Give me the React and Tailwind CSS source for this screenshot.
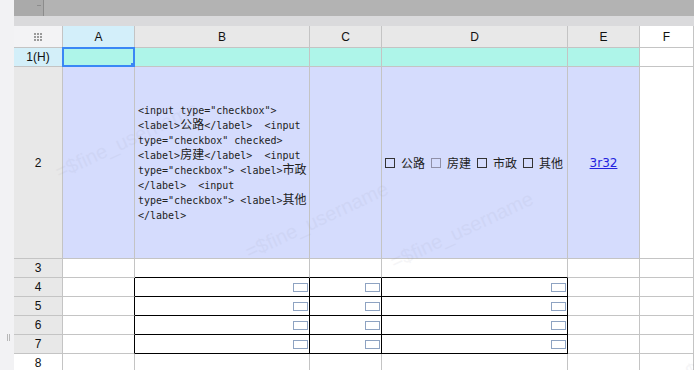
const COLS = [
  { key: 'A', w: 'w-[72px]' },
  { key: 'B', w: 'w-[175px]' },
  { key: 'C', w: 'w-[72px]' },
  { key: 'D', w: 'w-[186px]' },
  { key: 'E', w: 'w-[72px]' },
  { key: 'F', w: 'flex-1' },
]

const ROW_H = {
  1: 'h-[19px]',
  2: 'h-[192px]',
  3: 'h-[19px]',
  4: 'h-[19px]',
  5: 'h-[19px]',
  6: 'h-[19px]',
  7: 'h-[19px]',
  8: 'h-[19px]',
}

const boxed = (row, col) => row >= 4 && row <= 7 && ['B', 'C', 'D'].includes(col)

const Mini = () => (
  <div className="w-[15px] h-[9px] border border-[#8ea3c2] mr-[1px]" />
)

const Box = ({ light }) => (
  <span
    className={
      'inline-block shrink-0 w-[10px] h-[10px] border-[1.5px] ' +
      (light ? 'border-[#9090a8]' : 'border-[#333]')
    }
  />
)

const Cjk = ({ children }) => <span className="text-[12px] leading-[15px]">{children}</span>

const CodeText = () => (
  <div className="whitespace-pre font-['DejaVu_Sans_Mono','Noto_Sans_CJK_SC',monospace] text-[10px] leading-[15px] text-[#222] pl-[3px] pt-px">
    {'<input type="checkbox">\n'}
    {'<label>'}<Cjk>公路</Cjk>{'</label>  <input\n'}
    {'type="checkbox" checked>\n'}
    {'<label>'}<Cjk>房建</Cjk>{'</label>  <input\n'}
    {'type="checkbox"> <label>'}<Cjk>市政</Cjk>{'\n'}
    {'</label>  <input\n'}
    {'type="checkbox"> <label>'}<Cjk>其他</Cjk>{'\n'}
    {'</label>'}
  </div>
)

const Cell = ({ row, col }) => {
  let bg = 'bg-white'
  if (row === 1 && col !== 'F') bg = 'bg-[#aef5e9]'
  if (row === 2 && col !== 'F') bg = 'bg-[#d5dcfd]'

  const rightBlack = row >= 4 && row <= 7 && ['A', 'B', 'C', 'D'].includes(col)
  const bottomBlack = row >= 3 && row <= 7 && ['B', 'C', 'D'].includes(col)

  const cls = [
    'relative shrink-0 border-r border-b flex items-center',
    COLS.find((c) => c.key === col).w,
    bg,
    rightBlack ? 'border-r-black' : 'border-r-[#c4c4c4]',
    bottomBlack ? 'border-b-black' : 'border-b-[#c4c4c4]',
  ].join(' ')

  return (
    <div className={cls}>
      {row === 1 && col === 'A' && (
        <div className="absolute -left-px -top-px -right-px -bottom-px border-2 border-[#3a87f5]">
          <div className="absolute -right-[4px] -bottom-[4px] w-[6px] h-[6px] bg-[#3a87f5]" />
        </div>
      )}
      {row === 2 && col === 'B' && <CodeText />}
      {row === 2 && col === 'D' && (
        <div className="pl-[3px] flex items-center whitespace-nowrap text-[12px] text-[#222] font-['Noto_Sans_CJK_SC',sans-serif]">
          <Box />
          <span className="ml-[6px] mr-[6px]">公路</span>
          <Box light />
          <span className="ml-[6px] mr-[6px]">房建</span>
          <Box />
          <span className="ml-[6px] mr-[6px]">市政</span>
          <Box />
          <span className="ml-[6px]">其他</span>
        </div>
      )}
      {row === 2 && col === 'E' && (
        <div className="w-full text-center text-[12px] text-[#2222dd] underline font-['DejaVu_Sans',sans-serif]">
          3r32
        </div>
      )}
      {boxed(row, col) && (
        <div className="w-full flex justify-end items-center">
          <Mini />
        </div>
      )}
    </div>
  )
}

const RowHeader = ({ row }) => {
  let bg = 'bg-[#e8e8e8]'
  if (row === 1) bg = 'bg-[#d3eff9]'
  if (row === 8) bg = 'bg-white'
  return (
    <div
      className={
        'w-[49px] shrink-0 border-r border-b border-[#c4c4c4] flex items-center justify-center text-[12px] text-[#111] ' +
        bg
      }
    >
      {row === 1 ? '1(H)' : row}
    </div>
  )
}

const Watermark = ({ className }) => (
  <div
    className={
      'absolute whitespace-nowrap text-[20px] text-[#8a8aa0] opacity-[0.08] -rotate-[25deg] pointer-events-none font-["Liberation_Sans",sans-serif] ' +
      className
    }
  >
    =$fine_username
  </div>
)

export default function App() {
  return (
    <div className="w-[694px] h-[370px] overflow-hidden flex bg-white font-['Liberation_Sans',sans-serif]">
      <div className="w-[14px] shrink-0 bg-[#f2f2f4] relative">
        <div className="absolute left-[7px] top-[334px] w-[3px] h-[7px] border-l border-r border-[#b8b8b8]" />
      </div>
      <div className="flex-1 flex flex-col relative overflow-hidden">
        <div className="h-[16px] shrink-0 flex bg-[#b3b3b3]">
          <div className="w-[30px] bg-[#aaaaaa] border-r border-[#8c8c8c] relative">
            <div className="absolute right-[2px] top-[5px] w-[4px] h-px bg-[#8c8c8c]" />
          </div>
        </div>
        <div className="h-[10px] shrink-0 bg-[#dadadc]" />
        <div className="h-[22px] shrink-0 flex">
          <div className="w-[49px] shrink-0 bg-[#f3f3f5] border-r border-b border-[#c4c4c4] flex items-center justify-center">
            <div className="grid grid-cols-3 gap-[1px]">
              {Array.from({ length: 9 }).map((_, i) => (
                <div key={i} className="w-[2px] h-[2px] bg-[#9a9a9a]" />
              ))}
            </div>
          </div>
          {COLS.map((c) => (
            <div
              key={c.key}
              className={
                'shrink-0 border-r border-b border-[#c4c4c4] flex items-center justify-center text-[12px] text-[#111] ' +
                c.w +
                ' ' +
                (c.key === 'A' ? 'bg-[#d3effa]' : c.key === 'F' ? 'bg-white' : 'bg-[#e8e8e8]')
              }
            >
              {c.key}
            </div>
          ))}
        </div>
        {[1, 2, 3, 4, 5, 6, 7, 8].map((r) => (
          <div key={r} className={'flex shrink-0 ' + ROW_H[r]}>
            <RowHeader row={r} />
            {COLS.map((c) => (
              <Cell key={c.key} row={r} col={c.key} />
            ))}
          </div>
        ))}
        <Watermark className="left-[35px] top-[125px]" />
        <Watermark className="left-[225px] top-[205px]" />
        <Watermark className="left-[370px] top-[215px]" />
        <Watermark className="left-[655px] top-[330px]" />
      </div>
    </div>
  )
}
